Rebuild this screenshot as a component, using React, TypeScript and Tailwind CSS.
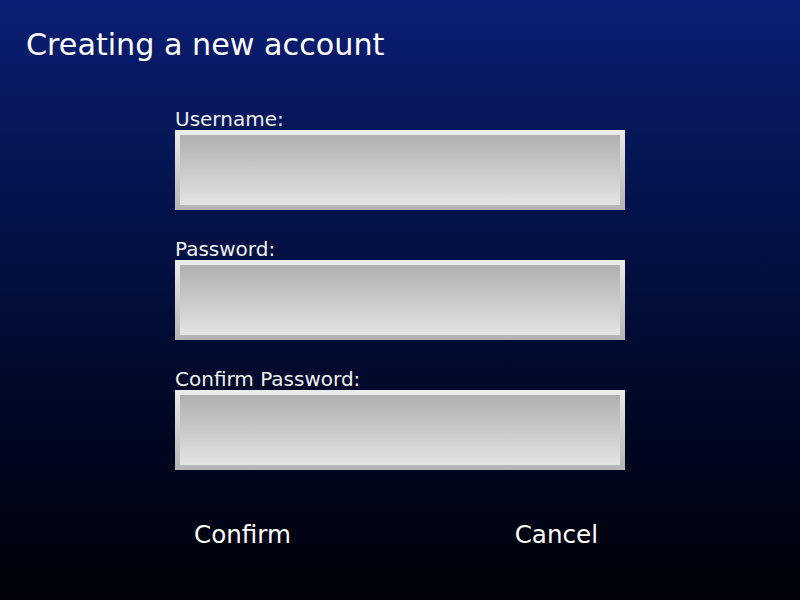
import React from "react";

function Field({ label }: { label: string }) {
  return (
    <div className="flex flex-col">
      <div className="h-[20px] text-[20px] leading-[18px] text-[#f0f0f0]">{label}</div>
      <div className="h-[80px] w-[450px] bg-gradient-to-b from-[#ececec] to-[#b4b4b4] p-[5px]">
        <div className="h-full w-full bg-gradient-to-b from-[#b0b0b0] to-[#e4e4e4]" />
      </div>
    </div>
  );
}

export default function App() {
  return (
    <div
      className="flex h-[600px] w-[800px] flex-col bg-gradient-to-b from-[#0b1e74] to-[#000208] text-white"
      style={{ fontFamily: '"DejaVu Sans", sans-serif' }}
    >
      <div className="pl-[26px] pt-[30px] text-[30.2px] leading-[30px]">Creating a new account</div>
      <div className="ml-[175px] mt-[50px] flex w-[450px] flex-col gap-[30px]">
        <Field label="Username:" />
        <Field label="Password:" />
        <Field label="Confirm Password:" />
      </div>
      <div className="ml-[175px] mt-[53px] flex w-[450px] justify-between pl-[19px] pr-[27px] text-[24.6px] leading-[24px]">
        <span>Confirm</span>
        <span>Cancel</span>
      </div>
    </div>
  );
}
